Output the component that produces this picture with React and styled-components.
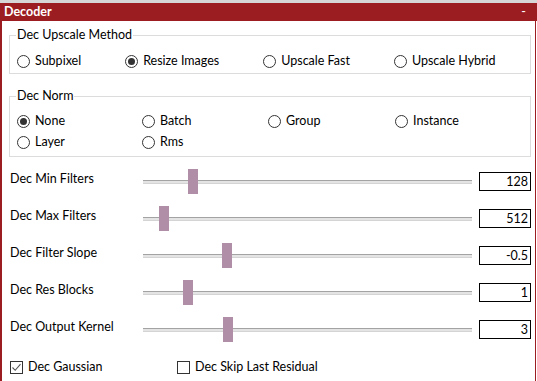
import React from 'react';
import styled, { createGlobalStyle } from 'styled-components';

const GlobalStyle = createGlobalStyle`
  html, body {
    margin: 0;
    padding: 0;
    background: #ffffff;
  }
  body {
    font-family: Lato, "Noto Sans", sans-serif;
    font-size: 12.5px;
    color: #000;
  }
`;

const upscaleMethods = [
  { label: 'Subpixel' },
  { label: 'Resize Images', checked: true },
  { label: 'Upscale Fast' },
  { label: 'Upscale Hybrid' },
];

const norms = [
  { label: 'None', checked: true },
  { label: 'Batch' },
  { label: 'Group' },
  { label: 'Instance' },
  { label: 'Layer' },
  { label: 'Rms' },
];

// offset = thumb left edge inside the track, in px
const sliders = [
  { label: 'Dec Min Filters', value: '128', offset: 45 },
  { label: 'Dec Max Filters', value: '512', offset: 16 },
  { label: 'Dec Filter Slope', value: '-0.5', offset: 79 },
  { label: 'Dec Res Blocks', value: '1', offset: 40 },
  { label: 'Dec Output Kernel', value: '3', offset: 80 },
];

const Radio = ({ label, checked }) => (
  <Option>
    <RadioDot $checked={checked} />
    <span>{label}</span>
  </Option>
);

const Check = ({ label, checked, $width }) => (
  <Option $width={$width}>
    <CheckBox>
      {checked && (
        <svg width="11" height="11" viewBox="0 0 11 11">
          <path d="M1.5 5.5 L4.2 8.3 L9.5 2.2" fill="none" stroke="#555" strokeWidth="1.1" />
        </svg>
      )}
    </CheckBox>
    <span>{label}</span>
  </Option>
);

const App = () => {
  return (
    <>
      <GlobalStyle />
      <Page>
        <TopStrip />
        <TitleBar>
          <span>Decoder</span>
          <Minimize>-</Minimize>
        </TitleBar>
        <Frame>
          <Group $top={6} $padTop={10} $padBottom={4}>
            <Legend>Dec Upscale Method</Legend>
            <FlowRow>
              {upscaleMethods.map((m) => (
                <Radio key={m.label} {...m} />
              ))}
            </FlowRow>
          </Group>

          <Group $top={14} $padTop={9} $padBottom={6}>
            <Legend>Dec Norm</Legend>
            <GridRows>
              {norms.map((m) => (
                <Radio key={m.label} {...m} />
              ))}
            </GridRows>
          </Group>

          <Sliders>
            {sliders.map((s) => (
              <SliderRow key={s.label}>
                <SliderLabel>{s.label}</SliderLabel>
                <Track>
                  <Thumb style={{ left: s.offset }} />
                </Track>
                <ValueBox>{s.value}</ValueBox>
              </SliderRow>
            ))}
          </Sliders>

          <CheckRow>
            <Check label="Dec Gaussian" checked $width={167} />
            <Check label="Dec Skip Last Residual" />
          </CheckRow>
        </Frame>
      </Page>
    </>
  );
};

export default App;

const Page = styled.div`
  width: 537px;
  height: 381px;
  display: flex;
  flex-direction: column;
  overflow: hidden;
`;

const TopStrip = styled.div`
  height: 3px;
  background: #d6d6d6;
`;

const TitleBar = styled.div`
  height: 18px;
  background: #9b1d22;
  color: #fff;
  font-weight: bold;
  display: flex;
  align-items: center;
  justify-content: space-between;
  padding: 0 11px 0 4px;
  line-height: 18px;
`;

const Minimize = styled.span`
  font-weight: normal;
`;

const Frame = styled.div`
  flex: 1;
  border-left: 2px solid #9b1d22;
  border-right: 1px solid #9b1d22;
  margin-right: 1px;
  display: flex;
  flex-direction: column;
`;

const Group = styled.fieldset`
  margin: ${(p) => p.$top}px 4px 0 7px;
  padding: ${(p) => p.$padTop}px 6px ${(p) => p.$padBottom}px 7px;
  border: 1px solid #dcdcdc;
  min-width: 0;
`;

const Legend = styled.legend`
  padding: 0 1px;
  margin-left: -1px;
  line-height: 16px;
  color: #000;
`;

const FlowRow = styled.div`
  display: flex;
  gap: 44px;
`;

const GridRows = styled.div`
  display: grid;
  grid-template-columns: 125px 126px 127px 1fr;
  row-gap: 5px;
`;

const Option = styled.label`
  display: flex;
  align-items: center;
  gap: 5px;
  height: 16px;
  line-height: 16px;
  white-space: nowrap;
  ${(p) => (p.$width ? `width: ${p.$width}px;` : '')}
`;

const RadioDot = styled.span`
  box-sizing: border-box;
  width: 13px;
  height: 13px;
  border: 1px solid #333;
  border-radius: 50%;
  display: flex;
  align-items: center;
  justify-content: center;
  flex: none;
  &::after {
    content: '';
    width: 7px;
    height: 7px;
    border-radius: 50%;
    background: #333;
    display: ${(p) => (p.$checked ? 'block' : 'none')};
  }
`;

const CheckBox = styled.span`
  box-sizing: border-box;
  width: 13px;
  height: 13px;
  border: 1px solid #333;
  display: flex;
  align-items: center;
  justify-content: center;
  flex: none;
`;

const Sliders = styled.div`
  margin-top: 6px;
  display: flex;
  flex-direction: column;
`;

const SliderRow = styled.div`
  height: 37px;
  display: flex;
  align-items: center;
  padding: 0 4px 0 8px;
`;

const SliderLabel = styled.div`
  width: 133px;
  margin-top: -6px;
`;

const Track = styled.div`
  position: relative;
  width: 329px;
  height: 2px;
  border-top: 1px solid #a3a3a3;
  border-bottom: 1px solid #d4d4d4;
  background: #e4e4e4;
`;

const Thumb = styled.div`
  position: absolute;
  top: -12px;
  width: 10px;
  height: 25px;
  background: #b18ea8;
`;

const ValueBox = styled.div`
  margin-left: 7px;
  box-sizing: border-box;
  width: 52px;
  height: 19px;
  border: 1px solid #000;
  text-align: right;
  padding-right: 2px;
  line-height: 17px;
`;

const CheckRow = styled.div`
  display: flex;
  margin-top: 11px;
  padding-left: 8px;
`;
